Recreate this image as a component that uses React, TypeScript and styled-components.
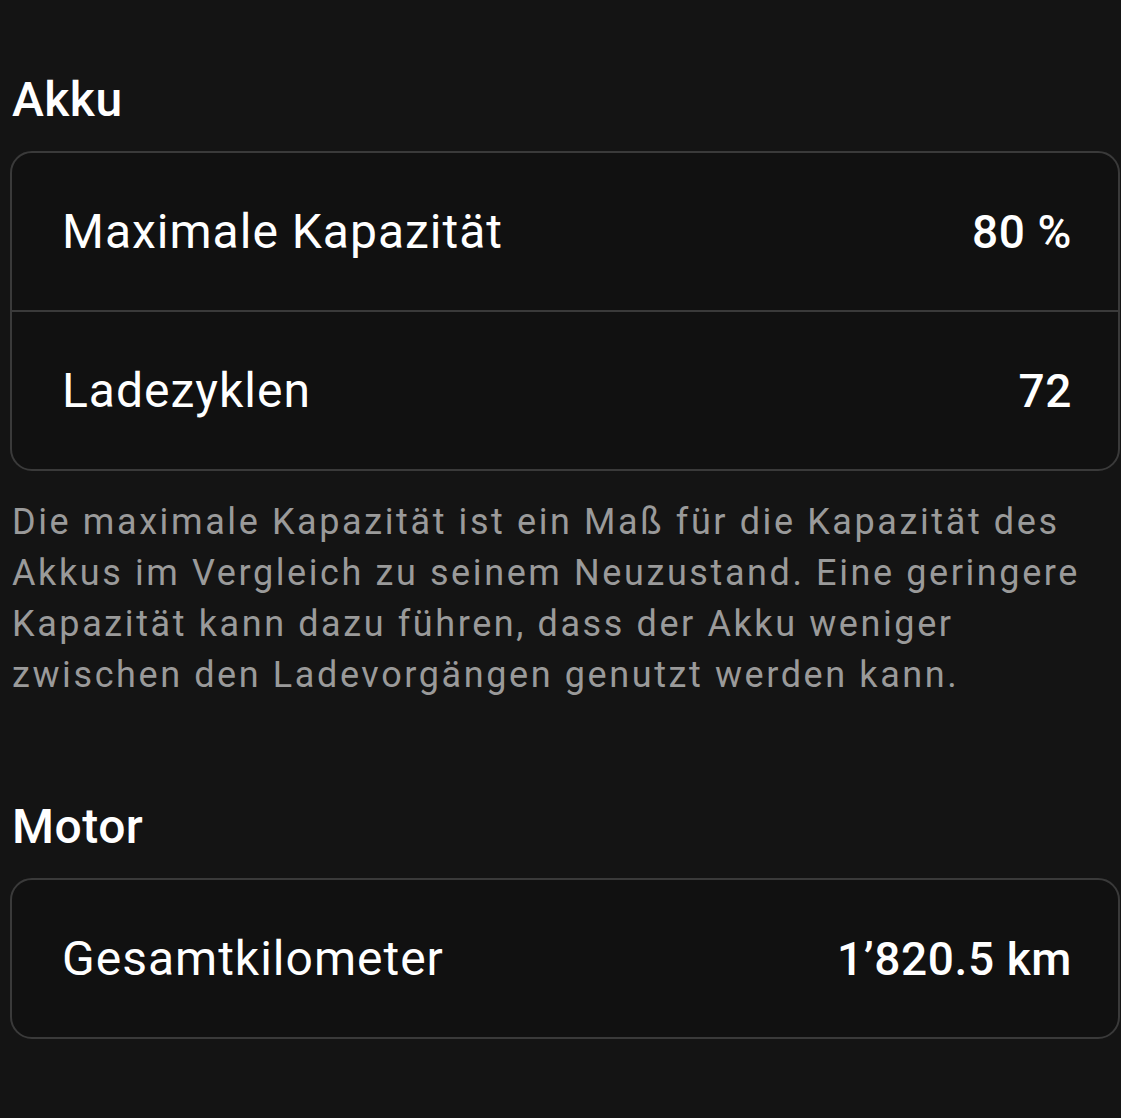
import styled, { createGlobalStyle } from "styled-components";

const GlobalStyle = createGlobalStyle`
  html, body {
    margin: 0;
    background: #141414;
  }
  body {
    font-family: Roboto, "Noto Sans", "DejaVu Sans", sans-serif;
    color: #ffffff;
  }
`;

interface Row {
  label: string;
  value: string;
}

const battery: Row[] = [
  { label: "Maximale Kapazität", value: "80 %" },
  { label: "Ladezyklen", value: "72" },
];

const motor: Row[] = [{ label: "Gesamtkilometer", value: "1’820.5 km" }];

function InfoCard({ rows }: { rows: Row[] }) {
  return (
    <Card>
      {rows.map((row) => (
        <CardRow key={row.label}>
          <Label>{row.label}</Label>
          <Value>{row.value}</Value>
        </CardRow>
      ))}
    </Card>
  );
}

export default function App() {
  return (
    <>
      <GlobalStyle />
      <Page>
        <Section>
          <Heading>Akku</Heading>
          <InfoCard rows={battery} />
          <Note>
            Die maximale Kapazität ist ein Maß für die Kapazität des Akkus im
            Vergleich zu seinem Neuzustand. Eine geringere Kapazität kann dazu
            führen, dass der Akku weniger zwischen den Ladevorgängen genutzt
            werden kann.
          </Note>
        </Section>
        <Section>
          <Heading>Motor</Heading>
          <InfoCard rows={motor} />
        </Section>
      </Page>
    </>
  );
}

const Page = styled.main`
  display: flex;
  flex-direction: column;
  gap: 94px;
  padding: 68px 1px 80px 10px;
  min-height: 1118px;
  box-sizing: border-box;
`;

const Section = styled.section`
  display: flex;
  flex-direction: column;
`;

const Heading = styled.h2`
  margin: 0 0 19px 2px;
  font-size: 48px;
  font-weight: 500;
  line-height: 64px;
  letter-spacing: 0.5px;
  color: #ffffff;
`;

const Card = styled.div`
  border: 2px solid #3a3a3a;
  border-radius: 22px;
  background: #111111;
  overflow: hidden;
`;

const CardRow = styled.div`
  display: flex;
  align-items: center;
  justify-content: space-between;
  height: 157px;
  padding: 0 46px 0 50px;

  & + & {
    border-top: 2px solid #3a3a3a;
  }
`;

const Label = styled.span`
  font-size: 48px;
  font-weight: 400;
  letter-spacing: 1px;
  color: #ffffff;
`;

const Value = styled.span`
  font-size: 46px;
  font-weight: 500;
  letter-spacing: 0.6px;
  color: #ffffff;
`;

const Note = styled.p`
  margin: 26px 20px 0 2px;
  font-size: 36px;
  line-height: 51px;
  letter-spacing: 2.6px;
  color: #9a9a9a;
`;
